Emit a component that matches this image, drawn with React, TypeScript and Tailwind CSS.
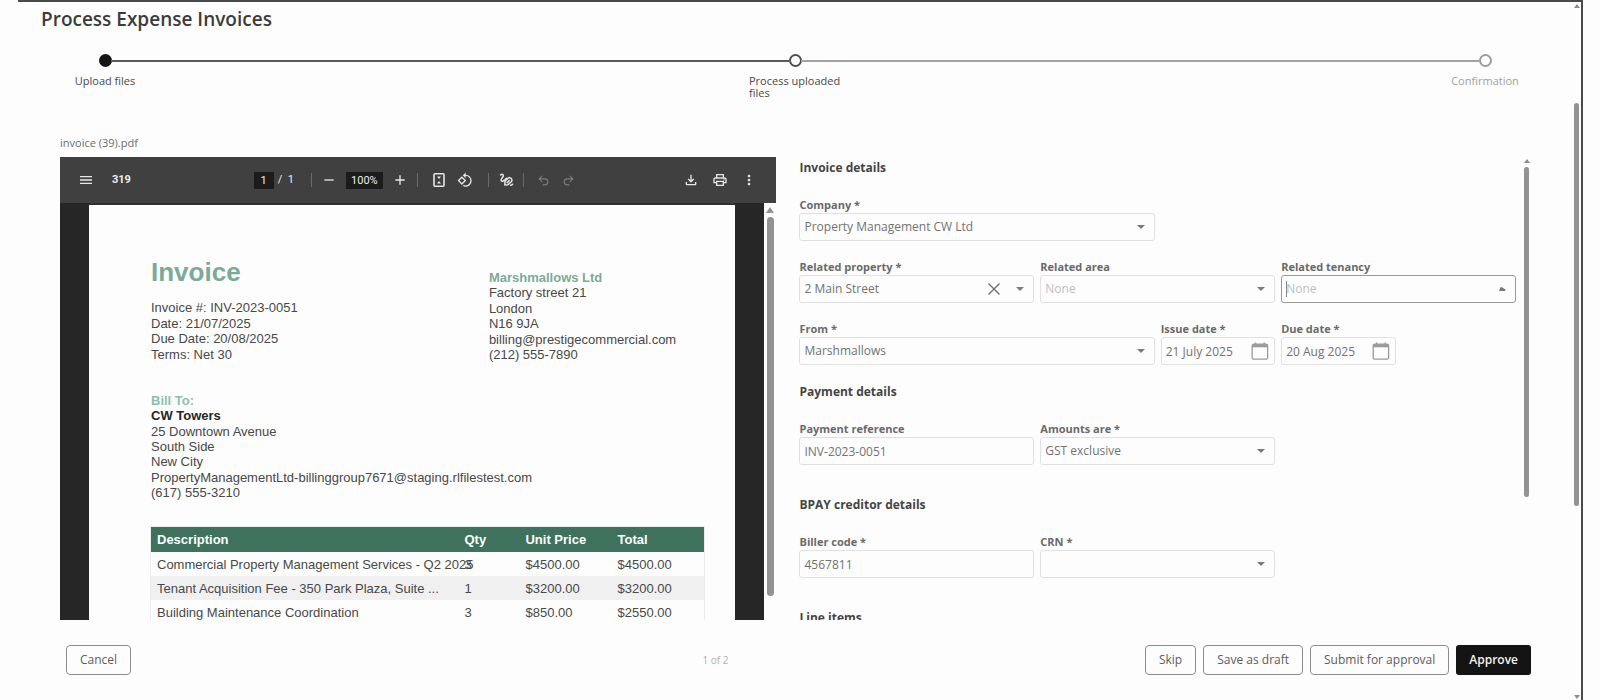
import type { ReactNode } from "react";
import { Redo2, Undo2 } from "lucide-react";
import {
  MdAdd,
  MdMenu,
  MdMoreVert,
  MdOutlineFileDownload,
  MdOutlinePrint,
  MdRemove,
  MdRotate90DegreesCcw,
} from "react-icons/md";

const steps = [
  { label: "Upload files", dot: "bg-[#141414] border-[#141414]", text: "text-[#4a4a4a]", line: "bg-[#5a5a5a]" },
  { label: "Process uploaded files", dot: "bg-white border-[#4f4f4f]", text: "text-[#4a4a4a]", line: "bg-[#a3a3a3]" },
  { label: "Confirmation", dot: "bg-white border-[#9c9c9c]", text: "text-[#a0a0a0]", line: "" },
];

const supplier = ["Factory street 21", "London", "N16 9JA", "billing@prestigecommercial.com", "(212) 555-7890"];

const meta = ["Invoice #: INV-2023-0051", "Date: 21/07/2025", "Due Date: 20/08/2025", "Terms: Net 30"];

const billTo = [
  "25 Downtown Avenue",
  "South Side",
  "New City",
  "PropertyManagementLtd-billinggroup7671@staging.rlfilestest.com",
  "(617) 555-3210",
];

const rows = [
  ["Commercial Property Management Services - Q2 2025", "3", "$4500.00", "$4500.00"],
  ["Tenant Acquisition Fee - 350 Park Plaza, Suite ...", "1", "$3200.00", "$3200.00"],
  ["Building Maintenance Coordination", "3", "$850.00", "$2550.00"],
];

function Stepper() {
  return (
    <ol className="flex items-start pl-[41px] pr-[41px] mt-[23px] h-[46px]">
      {steps.map((step, i) => (
        <li key={step.label} className={i < steps.length - 1 ? "flex flex-1 items-start" : "flex items-start"}>
          <div className="flex w-[92px] shrink-0 flex-col items-center">
            <span className={`size-[13px] rounded-full border-2 ${step.dot}`} />
            <span className={`mt-2 text-[11px] leading-[12px] ${step.text}`}>{step.label}</span>
          </div>
          {step.line && <div className={`-mx-[40px] mt-[6px] h-[2px] flex-1 ${step.line}`} />}
        </li>
      ))}
    </ol>
  );
}

function FitPageIcon() {
  return (
    <svg viewBox="0 0 16 16" className="size-4" fill="none" stroke="currentColor" strokeWidth="1.6">
      <rect x="3" y="1.8" width="10" height="12.4" rx="1" />
      <path d="M6 4.6h4L8 7zM6 11.4h4L8 9z" fill="currentColor" stroke="none" />
    </svg>
  );
}

function InkIcon() {
  return (
    <svg viewBox="0 0 16 16" className="size-4" fill="none" stroke="currentColor" strokeWidth="1.5" strokeLinecap="round" strokeLinejoin="round">
      <path d="M2.6 3C4 1.8 5.8 2.4 5.2 4.2 4.8 5.6 2.6 7 3.2 8.6c.6 1.2 2.2.4 3.2-.4l2-1.8" />
      <path d="M7 9.2l3-3c1.2-1 2.6-.6 3.4.4.8 1.2.6 2.4-.4 3.4l-3 2.8-3.2.2z" />
      <path d="M9.2 10.6l2-2M12.6 13.2c1 .1 1.6-.3 2-1" />
    </svg>
  );
}

function ToolButton({ label, dim, children }: { label: string; dim?: boolean; children: ReactNode }) {
  return (
    <button type="button" aria-label={label} className={dim ? "shrink-0 text-[#7d7d7d]" : "shrink-0 text-[#e6e6e6]"}>
      {children}
    </button>
  );
}

function Divider() {
  return <span className="h-3.5 w-px shrink-0 bg-[#6a6a6a]" />;
}

function PdfToolbar() {
  return (
    <div className="flex h-[46px] shrink-0 items-center bg-[#404040] font-['Roboto',sans-serif] text-[11px] text-[#ededed]">
      <div className="flex flex-1 items-center gap-[18px] pl-[18px]">
        <ToolButton label="Menu"><MdMenu size={16} /></ToolButton>
        <span className="font-bold">319</span>
      </div>
      <div className="flex items-center gap-[9px] pr-1.5">
        <div className="flex items-center gap-1 pr-2">
          <input aria-label="Page" defaultValue="1" className="h-[17px] w-5 bg-[#1b1b1b] text-center" />
          <span className="whitespace-pre">/  1</span>
        </div>
        <Divider />
        <ToolButton label="Zoom out"><MdRemove size={16} /></ToolButton>
        <input aria-label="Zoom" defaultValue="100%" className="h-[17px] w-[37px] bg-[#1b1b1b] text-center" />
        <ToolButton label="Zoom in"><MdAdd size={16} /></ToolButton>
        <Divider />
        <div className="flex items-center gap-2.5 pl-1 pr-1.5">
          <ToolButton label="Fit to page"><FitPageIcon /></ToolButton>
          <ToolButton label="Rotate"><MdRotate90DegreesCcw size={16} /></ToolButton>
        </div>
        <Divider />
        <ToolButton label="Draw"><InkIcon /></ToolButton>
        <Divider />
        <div className="flex items-center gap-3 pl-1">
          <ToolButton label="Undo" dim><Undo2 size={13} /></ToolButton>
          <ToolButton label="Redo" dim><Redo2 size={13} /></ToolButton>
        </div>
      </div>
      <div className="flex flex-1 items-center justify-end gap-[13px] pr-5">
        <ToolButton label="Download"><MdOutlineFileDownload size={16} /></ToolButton>
        <ToolButton label="Print"><MdOutlinePrint size={16} /></ToolButton>
        <ToolButton label="More"><MdMoreVert size={16} /></ToolButton>
      </div>
    </div>
  );
}

function InvoicePage() {
  return (
    <div className="mx-[29px] flex-1 overflow-hidden border-t-2 border-[#2f2f2f] bg-[#fdfdfd] pl-[62px] pr-[31px] font-['Liberation_Sans',sans-serif] text-[13px] leading-[15px] text-[#484848]">
      <div className="grid grid-cols-[337fr_215fr] pt-[52px]">
        <div>
          <h2 className="text-[26px] font-bold leading-[30px] text-[#7bab98]">Invoice</h2>
          <div className="mt-[13px] flex h-[62px] flex-col justify-between">
            {meta.map((line) => <p key={line}>{line}</p>)}
          </div>
        </div>
        <div className="mt-[13px] flex h-[92px] flex-col justify-between">
          <p className="font-bold text-[#7bab98]">Marshmallows Ltd</p>
          {supplier.map((line) => <p key={line} className="whitespace-nowrap">{line}</p>)}
        </div>
      </div>

      <div className="mt-[31px] flex h-[107px] flex-col justify-between">
        <p className="font-bold text-[#8fbfac]">Bill To:</p>
        <p className="font-bold text-[#262626]">CW Towers</p>
        {billTo.map((line) => <p key={line} className="whitespace-nowrap">{line}</p>)}
      </div>

      <table className="mt-[27px] w-full table-fixed text-left outline outline-[#ececec]">
        <colgroup>
          <col />
          <col className="w-[61px]" />
          <col className="w-[92px]" />
          <col className="w-[93px]" />
        </colgroup>
        <thead>
          <tr className="h-[25px] bg-[#3e725d] text-white">
            {["Description", "Qty", "Unit Price", "Total"].map((h) => (
              <th key={h} className="pl-1.5 font-bold">{h}</th>
            ))}
          </tr>
        </thead>
        <tbody>
          {rows.map((row) => (
            <tr key={row[0]} className="h-6 even:bg-[#f0f0f0]">
              {row.map((cell, i) => (
                <td key={i} className="whitespace-nowrap pl-1.5">{cell}</td>
              ))}
            </tr>
          ))}
        </tbody>
      </table>
    </div>
  );
}

function PdfViewer() {
  return (
    <div className="flex min-h-0 flex-1 flex-col">
      <PdfToolbar />
      <div className="flex min-h-0 flex-1">
        <div className="flex min-w-0 flex-1 bg-[#262626]">
          <InvoicePage />
        </div>
        <div className="flex w-3 flex-col items-center pt-1">
          <svg viewBox="0 0 8 6" className="h-1.5 w-2 fill-[#949494]"><path d="M4 0l4 6H0z" /></svg>
          <div className="mt-1 mb-6 w-[7px] flex-1 rounded-full bg-[#929292]" />
        </div>
      </div>
    </div>
  );
}

const boxBase = "h-7 w-full rounded-[3px] border bg-transparent px-1 text-[12px] outline-none";

function Label({ id, children }: { id: string; children: ReactNode }) {
  return (
    <label htmlFor={id} className="block text-[11px] font-bold leading-[16px] text-[#6a6a6a]">
      {children}
    </label>
  );
}

function SelectField(props: {
  id: string;
  label: string;
  value: string;
  span: string;
  muted?: boolean;
  clearable?: boolean;
  open?: boolean;
}) {
  const { id, label, value, span, muted, clearable, open } = props;
  return (
    <div className={span}>
      <Label id={id}>{label}</Label>
      <div className="relative">
        <select
          id={id}
          className={`${boxBase} appearance-none ${muted ? "text-[#bdbdbd]" : "text-[#727272]"} ${open ? "border-[#9a9a9a]" : "border-[#e0e0e0]"}`}
        >
          <option>{value}</option>
        </select>
        {open && <span className="absolute left-[5px] top-1.5 h-4 w-px bg-[#8a8a8a]" />}
        {clearable && (
          <button type="button" aria-label="Clear" className="absolute right-[34px] top-2 text-[#6f6f6f]">
            <svg viewBox="0 0 12 12" className="size-3" stroke="currentColor" strokeWidth="1.4">
              <path d="M.5.5l11 11M11.5.5l-11 11" />
            </svg>
          </button>
        )}
        <svg viewBox="0 0 8 4" className="pointer-events-none absolute right-[10px] top-3 h-1 w-2 fill-[#7a7a7a]">
          {open ? <path d="M1 4 2.6 0 4 .2 7.4 2.6V4z" /> : <path d="M0 0h8L4 4z" />}
        </svg>
      </div>
    </div>
  );
}

function TextField({ id, label, value, span, date }: { id: string; label: string; value: string; span: string; date?: boolean }) {
  return (
    <div className={span}>
      <Label id={id}>{label}</Label>
      <div className="relative">
        <input id={id} defaultValue={value} className={`${boxBase} border-[#e0e0e0] text-[#727272]`} />
        {date && (
          <svg viewBox="0 0 18 18" className="pointer-events-none absolute right-1.5 top-[5px] size-[18px]" fill="none" stroke="#999999" strokeWidth="1.3">
            <rect x="1.2" y="2.2" width="15.4" height="15" rx="1.5" />
            <path d="M1.2 3.8h15.4" strokeWidth="3" />
            <path d="M4.6.4v2M13.2.4v2" />
          </svg>
        )}
      </div>
    </div>
  );
}

function SectionTitle({ children }: { children: ReactNode }) {
  return <h2 className="mb-[19px] text-[12px] font-bold leading-[20px] text-[#444444]">{children}</h2>;
}

function InvoiceForm() {
  const fields = "grid grid-cols-6 gap-x-1.5 gap-y-[18px]";
  return (
    <form className="min-w-0 flex-1 overflow-hidden pt-px">
      <SectionTitle>Invoice details</SectionTitle>
      <div className={fields}>
        <SelectField id="company" label="Company *" value="Property Management CW Ltd" span="col-span-3" />
        <SelectField id="property" label="Related property *" value="2 Main Street" span="col-span-2 col-start-1" clearable />
        <SelectField id="area" label="Related area" value="None" span="col-span-2" muted />
        <SelectField id="tenancy" label="Related tenancy" value="None" span="col-span-2" muted open />
        <SelectField id="from" label="From *" value="Marshmallows" span="col-span-3" />
        <TextField id="issue" label="Issue date *" value="21 July 2025" span="col-span-1" date />
        <TextField id="due" label="Due date *" value="20 Aug 2025" span="col-span-1" date />
      </div>

      <div className="mt-[17px]">
        <SectionTitle>Payment details</SectionTitle>
        <div className={fields}>
          <TextField id="reference" label="Payment reference" value="INV-2023-0051" span="col-span-2" />
          <SelectField id="amounts" label="Amounts are *" value="GST exclusive" span="col-span-2" />
        </div>
      </div>

      <div className="mt-[30px]">
        <SectionTitle>BPAY creditor details</SectionTitle>
        <div className={fields}>
          <TextField id="biller" label="Biller code *" value="4567811" span="col-span-2" />
          <SelectField id="crn" label="CRN *" value="" span="col-span-2" />
        </div>
      </div>

      <div className="mt-[30px]">
        <SectionTitle>Line items</SectionTitle>
      </div>
    </form>
  );
}

const outlined = "h-[30px] rounded-[4px] border border-[#8c8c8c] px-[13px] text-[12px] text-[#5c5c5c]";

export default function App() {
  return (
    <div className="h-screen overflow-hidden bg-[#fdfdfd] pl-[18px] pr-[17px] font-['Open_Sans','Noto_Sans',sans-serif]">
      <div className="flex h-full border-r-2 border-t-2 border-[#4a4a4a]">
        <div className="flex min-w-0 flex-1 flex-col">
          <h1 className="pl-[23px] pt-[5px] text-[19px] font-semibold leading-[24px] text-[#3c3c3c]">Process Expense Invoices</h1>
          <Stepper />

          <div className="mt-[35px] grid min-h-0 flex-1 grid-cols-[716fr_730fr] gap-x-[23px] pl-[42px] pr-[42px]">
            <div className="flex min-h-0 flex-col">
              <p className="mb-1.5 text-[11px] leading-[16px] text-[#6b6b6b]">invoice (39).pdf</p>
              <PdfViewer />
            </div>
            <div className="mt-[22px] flex min-h-0">
              <InvoiceForm />
              <div className="ml-2 flex w-1.5 flex-col items-center pt-0.5">
                <svg viewBox="0 0 6 4" className="h-1 w-1.5 fill-[#8d8d8d]"><path d="M3 0l3 4H0z" /></svg>
                <div className="mt-1 h-[330px] w-[5px] rounded-full bg-[#929292]" />
              </div>
            </div>
          </div>

          <div className="grid h-20 shrink-0 grid-cols-[716fr_731fr] items-center gap-x-[23px] pl-[42px] pr-[41px]">
            <div className="flex items-center justify-between pl-1.5 pr-12">
              <button type="button" className={outlined}>Cancel</button>
              <span className="text-[10px] text-[#b0b0b0]">1 of 2</span>
            </div>
            <div className="flex justify-end gap-[7px]">
              <button type="button" className={outlined}>Skip</button>
              <button type="button" className={outlined}>Save as draft</button>
              <button type="button" className={outlined}>Submit for approval</button>
              <button type="button" className="h-[30px] rounded-[3px] bg-[#141414] px-[13px] text-[12px] font-semibold text-[#f2f2f2]">
                Approve
              </button>
            </div>
          </div>
        </div>

        <div className="flex w-[9px] flex-col items-center pt-0.5 pb-px">
          <svg viewBox="0 0 6 4" className="h-1 w-1.5 fill-[#8d8d8d]"><path d="M3 0l3 4H0z" /></svg>
          <div className="mt-[95px] h-[403px] w-[5px] rounded-full bg-[#929292]" />
          <svg viewBox="0 0 6 4" className="mt-auto h-1 w-1.5 fill-[#8d8d8d]"><path d="M0 0h6L3 4z" /></svg>
        </div>
      </div>
    </div>
  );
}
